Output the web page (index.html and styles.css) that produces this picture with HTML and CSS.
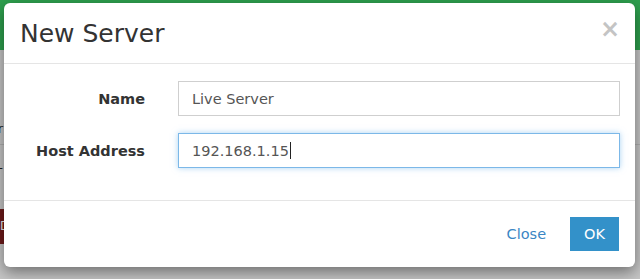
FILE: index.html
```html
<!DOCTYPE html>
<html lang="en">
<head>
  <meta charset="UTF-8">
  <title>New Server</title>
  <link rel="stylesheet" href="styles.css">
</head>
<body>
  <div class="page">
    <header class="topbar">
      <span class="brand">Servers</span>
    </header>
    <main class="content">
      <div class="row"><span class="cell">Server</span></div>
      <div class="row row-tall"><span class="cell">-</span></div>
      <div class="btn-danger">Delete</div>
    </main>
  </div>

  <div class="modal">
    <div class="modal-header">
      <h1 class="modal-title">New Server</h1>
      <span class="close">&times;</span>
    </div>
    <div class="modal-body">
      <div class="form-row">
        <label class="form-label">Name</label>
        <div class="input">Live Server</div>
      </div>
      <div class="form-row">
        <label class="form-label">Host Address</label>
        <div class="input input-focus">192.168.1.15<span class="caret"></span></div>
      </div>
    </div>
    <div class="modal-footer">
      <a href="#" class="link">Close</a>
      <button class="button">OK</button>
    </div>
  </div>
</body>
</html>
```

FILE: styles.css
```css
body {
  font-family: "DejaVu Sans", Verdana, sans-serif;
  font-size: 14.5px;
  color: #333;
  margin: 0;
  padding: 0;
  width: 640px;
  height: 279px;
  overflow: hidden;
  background-color: #c6c6c6;
}

.page {
  height: 279px;
}

.topbar {
  height: 50px;
  background-color: #2ea04e;
  padding: 0 20px;
  overflow: hidden;
}

.brand {
  display: block;
  color: #d8efdf;
  font-size: 24px;
  line-height: 1;
  margin-top: -20px;
}

.content {
  padding-top: 62px;
}

.row {
  display: flex;
  align-items: center;
  height: 32px;
  border-bottom: 1px solid #b0b0b0;
}

.row-tall {
  height: 44px;
  border-bottom: none;
}

.cell {
  display: flex;
  justify-content: flex-end;
  width: 3px;
  color: #222;
  font-size: 13px;
  white-space: nowrap;
}

.btn-danger {
  margin-top: 20px;
  height: 35px;
  width: 4px;
  overflow: hidden;
  background-color: #6e1a1a;
  color: #eee;
  font-size: 12px;
  line-height: 35px;
}

.modal {
  position: absolute;
  left: 4px;
  top: 3px;
  width: 631px;
  background-color: white;
  border-radius: 6px;
  box-shadow: 0 5px 15px rgba(0, 0, 0, 0.45);
}

.modal-header {
  display: flex;
  justify-content: space-between;
  align-items: center;
  height: 60px;
  padding: 0 15px 0 16px;
  border-bottom: 1px solid #e5e5e5;
}

.modal-title {
  font-size: 25px;
  font-weight: normal;
  color: #333;
  margin: 0;
}

.close {
  font-size: 24px;
  font-weight: bold;
  color: #c4c4c4;
  line-height: 1;
  margin-right: 0;
  margin-top: -8px;
}

.modal-body {
  padding: 17px 15px 32px 15px;
  display: flex;
  flex-direction: column;
  gap: 17px;
  border-bottom: 1px solid #e5e5e5;
}

.form-row {
  display: grid;
  grid-template-columns: 126px 1fr;
  column-gap: 33px;
  align-items: center;
}

.form-label {
  text-align: right;
  font-weight: bold;
  color: #333;
}

.input {
  height: 35px;
  box-sizing: border-box;
  border: 1px solid #cfcfcf;
  padding: 0 13px;
  display: flex;
  align-items: center;
  color: #555;
}

.input-focus {
  border-color: #7cb8e8;
  box-shadow: 0 0 6px rgba(102, 175, 233, 0.55);
}

.caret {
  display: inline-block;
  width: 1px;
  height: 17px;
  background-color: #222;
  margin-left: 1px;
}

.modal-footer {
  display: flex;
  justify-content: flex-end;
  align-items: center;
  gap: 24px;
  padding: 16px 16px 16px 15px;
}

.link {
  color: #3a86c4;
  text-decoration: none;
}

.button {
  font-family: inherit;
  font-size: 14.5px;
  background-color: #3391c9;
  color: white;
  border: none;
  height: 34px;
  padding: 0 14px;
}
```
